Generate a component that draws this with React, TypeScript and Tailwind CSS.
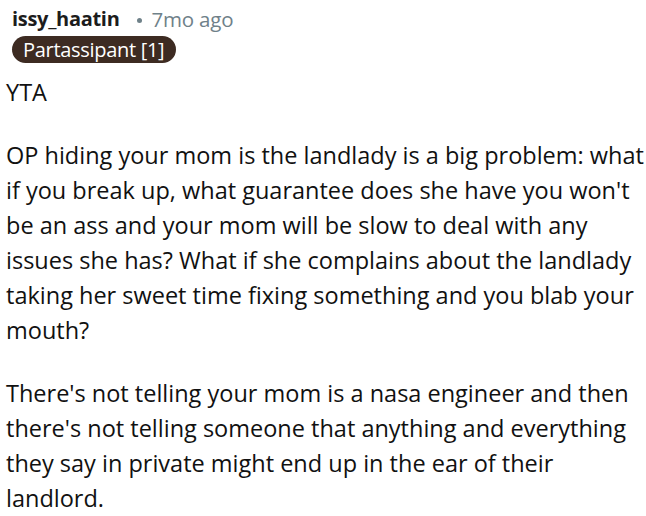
export default function App() {
  return (
    <div className="w-[646px] h-[516px] overflow-hidden bg-white font-['Open_Sans',sans-serif] text-[#1a1a1b]">
      <div className="pl-[12px] pt-[3px]">
        <div className="flex items-center leading-[32px]">
          <span className="text-[20px] font-bold tracking-[-0.3px] text-[#1c1c1c]">issy_haatin</span>
          <span className="ml-[17px] mr-[10px] mt-[2px] h-[5px] w-[5px] rounded-full bg-[#6f8189]" />
          <span className="text-[20.5px] tracking-[-0.2px] text-[#6f8189]">7mo ago</span>
        </div>
        <div className="mt-[1px] inline-flex h-[27px] items-center rounded-full bg-[#3d2b22] pl-[11px] pr-[12px] text-[20px] tracking-[-0.3px] text-white">
          Partassipant [1]
        </div>
      </div>
      <div className="pl-[6px] pt-[12px] text-[23.5px] leading-[35px] text-[#111]">
        <p>YTA</p>
        <p className="mt-[28px]">
          OP hiding your mom is the landlady is a big problem: what if you break up, what guarantee does
          she have you won't be an ass and your mom will be slow to deal with any issues she has? What if
          she complains about the landlady taking her sweet time fixing something and you blab your mouth?
        </p>
        <p className="mt-[28px]">
          There's not telling your mom is a nasa engineer and then there's not telling someone that
          anything and everything they say in private might end up in the ear of their landlord.
        </p>
      </div>
    </div>
  );
}
